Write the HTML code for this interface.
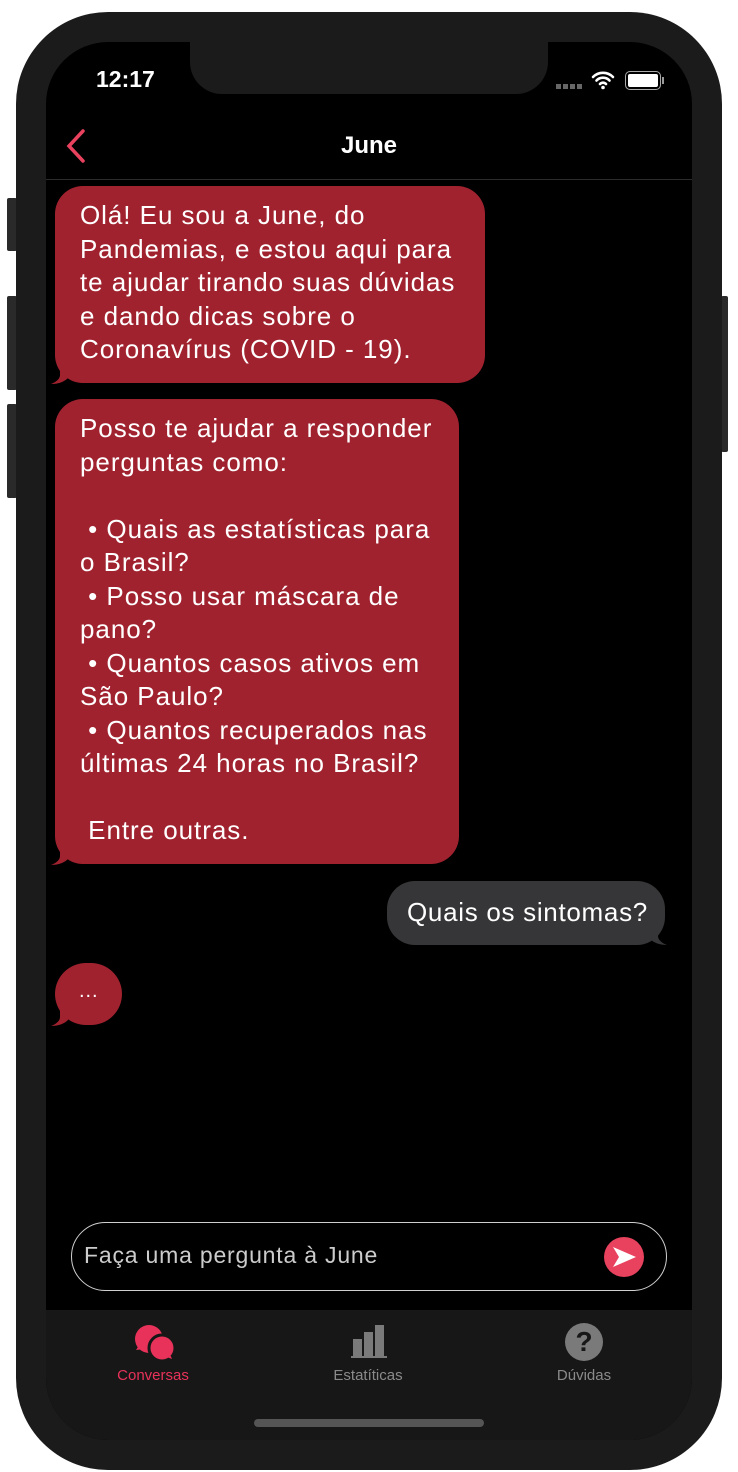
<!DOCTYPE html>
<html><head><meta charset="utf-8"><style>
*{margin:0;padding:0;box-sizing:border-box}
body{width:738px;height:1472px;background:#fff;position:relative;overflow:hidden;font-family:"Liberation Sans",sans-serif;color:#fff}
.a{position:absolute}
.btn{position:absolute;background:#2a2a2a;border-radius:2px}
.frame{left:16px;top:12px;width:706px;height:1458px;background:#1b1b1b;border-radius:92px}
.screen{left:46px;top:42px;width:646px;height:1398px;background:#000;border-radius:62px;overflow:hidden}
.notch{left:190px;top:42px;width:358px;height:52px;background:#1b1b1b;border-radius:0 0 32px 32px}
.b{position:absolute;background:#a0222f;border-radius:28px;font-size:26px;letter-spacing:0.95px;line-height:33.5px;padding:13px 0 0 25px;white-space:pre}
</style></head><body>
<div class="btn" style="left:7px;top:198px;width:10px;height:53px"></div>
<div class="btn" style="left:7px;top:296px;width:10px;height:94px"></div>
<div class="btn" style="left:7px;top:404px;width:10px;height:94px"></div>
<div class="btn" style="left:721px;top:296px;width:7px;height:156px"></div>
<div class="a frame"></div>
<div class="a screen">
  <div class="a" style="left:0;top:1268px;width:646px;height:130px;background:#171717"></div>
</div>
<div class="a notch"></div>
<div class="a" style="left:96px;top:66px;font-size:23px;font-weight:bold">12:17</div>
<div class="a" style="left:556px;top:84px;width:28px;height:5px;background:repeating-linear-gradient(90deg,#666 0 5px,transparent 5px 7px)"></div>
<svg class="a" style="left:591px;top:70px" width="24" height="20" viewBox="0 0 24 20"><path d="M2 7a14 14 0 0 1 20 0M5.5 10.5a9 9 0 0 1 13 0M9 14a4 4 0 0 1 6 0" stroke="#fff" stroke-width="2.6" fill="none" stroke-linecap="round"/><circle cx="12" cy="17.5" r="1.8" fill="#fff"/></svg>
<div class="a" style="left:625px;top:71px;width:36px;height:19px;border:1.5px solid #aaa;border-radius:5px;padding:2px"><div style="width:100%;height:100%;background:#fff;border-radius:2px"></div></div>
<div class="a" style="left:662px;top:77px;width:2px;height:7px;background:#999"></div>
<svg class="a" style="left:64px;top:128px" width="24" height="36"><path d="M19 3L5 18l14 15" stroke="#e8425f" stroke-width="3.5" fill="none" stroke-linecap="round"/></svg>
<div class="a" style="left:0;width:738px;top:132px;text-align:center;font-size:24px;font-weight:bold">June</div>
<div class="a" style="left:46px;top:179px;width:646px;height:1px;background:#2b2b2b"></div>

<svg class="a" style="left:48px;top:355px" width="30" height="30"><path d="M12 0v20c0 4-4 7-9 9 7 0 13-2 17-6L30 0z" fill="#a0222f"/></svg>
<div class="b" style="left:55px;top:186px;width:430px;height:197px">Olá! Eu sou a June, do
Pandemias, e estou aqui para
te ajudar tirando suas dúvidas
e dando dicas sobre o
Coronavírus (COVID - 19).</div>
<svg class="a" style="left:48px;top:836px" width="30" height="30"><path d="M12 0v20c0 4-4 7-9 9 7 0 13-2 17-6L30 0z" fill="#a0222f"/></svg>
<div class="b" style="left:55px;top:399px;width:404px;height:465px">Posso te ajudar a responder
perguntas como:

 • Quais as estatísticas para
o Brasil?
 • Posso usar máscara de
pano?
 • Quantos casos ativos em
São Paulo?
 • Quantos recuperados nas
últimas 24 horas no Brasil?

 Entre outras.</div>
<svg class="a" style="left:640px;top:916px" width="32" height="30"><path d="M18 0v20c0 4 4 7 9 9-7 0-13-2-17-6L0 0z" fill="#363638"/></svg>
<div class="b" style="left:387px;top:881px;width:278px;height:64px;background:#363638;padding:15px 0 0 20px;letter-spacing:0.7px">Quais os sintomas?</div>
<svg class="a" style="left:48px;top:997px" width="30" height="30"><path d="M12 0v20c0 4-4 7-9 9 7 0 13-2 17-6L30 0z" fill="#a0222f"/></svg>
<div class="b" style="left:55px;top:963px;width:67px;height:62px;border-radius:31px;padding:12px 0 0 24px;font-size:20px">...</div>

<div class="a" style="left:71px;top:1222px;width:596px;height:69px;border:1.5px solid #d0d0d0;border-radius:35px"></div>
<div class="a" style="left:84px;top:1242px;font-size:23px;letter-spacing:0.8px;color:#ccc">Faça uma pergunta à June</div>
<div class="a" style="left:604px;top:1237px;width:40px;height:40px;border-radius:50%;background:#e8425f"></div>
<svg class="a" style="left:610px;top:1244px" width="28" height="26"><path d="M3 3l23 10-23 10 6-10z" fill="#fff"/></svg>

<svg class="a" style="left:132px;top:1324px" width="46" height="38"><circle cx="17" cy="15" r="14" fill="#e8325a"/><path d="M4 26l4-6 5 5z" fill="#e8325a"/><circle cx="30" cy="24" r="13" fill="#e8325a" stroke="#171717" stroke-width="3"/><path d="M40 35l-3-7-5 4z" fill="#e8325a"/></svg>
<div class="a" style="left:93px;width:120px;top:1367px;text-align:center;font-size:15px;color:#e8325a">Conversas</div>
<svg class="a" style="left:350px;top:1323px" width="38" height="36"><rect x="3" y="16" width="9" height="18" fill="#7a7a7a"/><rect x="14" y="9" width="9" height="25" fill="#7a7a7a"/><rect x="25" y="2" width="9" height="32" fill="#7a7a7a"/><rect x="1" y="33" width="36" height="2" fill="#7a7a7a"/></svg>
<div class="a" style="left:308px;width:120px;top:1367px;text-align:center;font-size:15px;color:#8a8a8a">Estatíticas</div>
<div class="a" style="left:565px;top:1323px;width:38px;height:38px;border-radius:50%;background:#7a7a7a;color:#171717;font-size:28px;font-weight:bold;text-align:center;line-height:38px">?</div>
<div class="a" style="left:524px;width:120px;top:1367px;text-align:center;font-size:15px;color:#8a8a8a">Dúvidas</div>
<div class="a" style="left:254px;top:1419px;width:230px;height:8px;border-radius:4px;background:#555"></div>
</body></html>
